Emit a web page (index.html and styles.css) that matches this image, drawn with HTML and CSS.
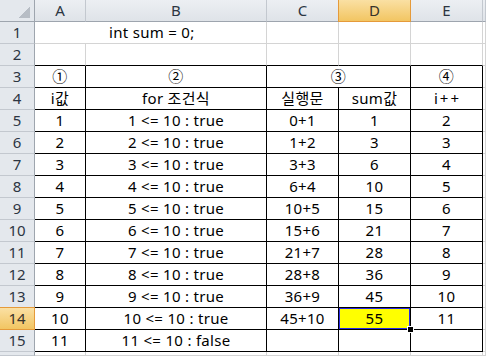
FILE: index.html
```html
<!DOCTYPE html>
<html lang="ko">

<head>
    <meta charset="UTF-8">
    <meta name="viewport" content="width=device-width, initial-scale=1.0">
    <title>for loop sum</title>
    <link rel="stylesheet" href="styles.css">
</head>

<body>

    <div class="sheet">
        <!-- column headers -->
        <div class="corner"></div>
        <div class="col-head">A</div>
        <div class="col-head">B</div>
        <div class="col-head">C</div>
        <div class="col-head sel">D</div>
        <div class="col-head">E</div>
        <div class="col-head"></div>

        <div class="row-head">1</div>
        <div class="cell wide code">int sum = 0;</div>
        <div class="cell"></div>
        <div class="cell"></div>
        <div class="cell"></div>
        <div class="cell"></div>

        <div class="row-head">2</div>
        <div class="cell edge"></div>
        <div class="cell edge"></div>
        <div class="cell edge"></div>
        <div class="cell edge"></div>
        <div class="cell edge"></div>
        <div class="cell"></div>

        <!-- step numbers + titles -->
        <div class="row-head">3</div>
        <div class="cell box">①</div>
        <div class="cell box">②</div>
        <div class="cell box wide">③</div>
        <div class="cell box">④</div>
        <div class="cell"></div>

        <div class="row-head">4</div>
        <div class="cell box">i값</div>
        <div class="cell box">for 조건식</div>
        <div class="cell box">실행문</div>
        <div class="cell box">sum값</div>
        <div class="cell box inc">i++</div>
        <div class="cell"></div>

        <div class="row-head">5</div>
        <div class="cell box">1</div>
        <div class="cell box">1 &lt;= 10 : true</div>
        <div class="cell box">0+1</div>
        <div class="cell box">1</div>
        <div class="cell box">2</div>
        <div class="cell"></div>

        <div class="row-head">6</div>
        <div class="cell box">2</div>
        <div class="cell box">2 &lt;= 10 : true</div>
        <div class="cell box">1+2</div>
        <div class="cell box">3</div>
        <div class="cell box">3</div>
        <div class="cell"></div>

        <div class="row-head">7</div>
        <div class="cell box">3</div>
        <div class="cell box">3 &lt;= 10 : true</div>
        <div class="cell box">3+3</div>
        <div class="cell box">6</div>
        <div class="cell box">4</div>
        <div class="cell"></div>

        <div class="row-head">8</div>
        <div class="cell box">4</div>
        <div class="cell box">4 &lt;= 10 : true</div>
        <div class="cell box">6+4</div>
        <div class="cell box">10</div>
        <div class="cell box">5</div>
        <div class="cell"></div>

        <div class="row-head">9</div>
        <div class="cell box">5</div>
        <div class="cell box">5 &lt;= 10 : true</div>
        <div class="cell box">10+5</div>
        <div class="cell box">15</div>
        <div class="cell box">6</div>
        <div class="cell"></div>

        <div class="row-head">10</div>
        <div class="cell box">6</div>
        <div class="cell box">6 &lt;= 10 : true</div>
        <div class="cell box">15+6</div>
        <div class="cell box">21</div>
        <div class="cell box">7</div>
        <div class="cell"></div>

        <div class="row-head">11</div>
        <div class="cell box">7</div>
        <div class="cell box">7 &lt;= 10 : true</div>
        <div class="cell box">21+7</div>
        <div class="cell box">28</div>
        <div class="cell box">8</div>
        <div class="cell"></div>

        <div class="row-head">12</div>
        <div class="cell box">8</div>
        <div class="cell box">8 &lt;= 10 : true</div>
        <div class="cell box">28+8</div>
        <div class="cell box">36</div>
        <div class="cell box">9</div>
        <div class="cell"></div>

        <div class="row-head">13</div>
        <div class="cell box">9</div>
        <div class="cell box">9 &lt;= 10 : true</div>
        <div class="cell box">36+9</div>
        <div class="cell box">45</div>
        <div class="cell box">10</div>
        <div class="cell"></div>

        <div class="row-head sel">14</div>
        <div class="cell box">10</div>
        <div class="cell box">10 &lt;= 10 : true</div>
        <div class="cell box">45+10</div>
        <div class="cell box active">55</div>
        <div class="cell box">11</div>
        <div class="cell"></div>

        <div class="row-head">15</div>
        <div class="cell box">11</div>
        <div class="cell box">11 &lt;= 10 : false</div>
        <div class="cell box"></div>
        <div class="cell box"></div>
        <div class="cell box"></div>
        <div class="cell"></div>

        <!-- next row, only its top edge shows -->
        <div class="row-head"></div>
        <div class="cell"></div>
        <div class="cell"></div>
        <div class="cell"></div>
        <div class="cell"></div>
        <div class="cell"></div>
        <div class="cell"></div>
    </div>

</body>

</html>
```

FILE: styles.css
```css
*,
::before,
::after {
    margin: 0;
    box-sizing: border-box;
}

html,
body {
    height: 100%;
    overflow: hidden;
}

body {
    font: 15px/21px "Noto Sans", "Noto Sans CJK KR", sans-serif;
    letter-spacing: 0.3px;
    background: #fff;
    color: #000;
}

.sheet {
    display: grid;
    grid-template-columns: 35px 51px 181px 72px 72px 72px 1fr;
    grid-template-rows: repeat(16, 22px) 4px;
}

/* header strip */
.corner,
.col-head,
.row-head {
    background: #e4e8ed;
    color: #2c3542;
    text-align: center;
    letter-spacing: 0;
    border-right: 1px solid #c3c8cf;
    border-bottom: 1px solid #c3c8cf;
}

.corner {
    border-right-color: #9ea5ae;
    border-bottom-color: #9ea5ae;
    background: linear-gradient(to top left, #b7bdc5 50%, transparent 50%) no-repeat right 4px bottom 3px / 12px 12px, #e4e8ed;
}

.col-head {
    background: linear-gradient(#eceff3, #dfe3e8);
    border-bottom-color: #9ea5ae;
}

.row-head {
    border-right-color: #9ea5ae;
}

.col-head.sel,
.row-head.sel {
    background: linear-gradient(#fae0a3, #f2c562);
    border-color: #e59a3a;
    color: #38322a;
}

.col-head.sel {
    box-shadow: -1px 0 0 #e59a3a;
}

.row-head.sel {
    box-shadow: 0 -1px 0 #e59a3a;
}

/* cells */
.cell {
    text-align: center;
    white-space: nowrap;
    overflow: hidden;
    border-right: 1px solid #d4d4d4;
    border-bottom: 1px solid #d4d4d4;
}

.wide {
    grid-column: span 2;
}

.code {
    text-align: left;
    padding-left: 74px;
}

.inc {
    letter-spacing: 2px;
    text-indent: 2px;
}

.edge {
    border-bottom-color: #000;
}

.box {
    border-right-color: #000;
    border-bottom-color: #000;
}

.active {
    position: relative;
    z-index: 1;
    overflow: visible;
    background: #ff0;
    box-shadow: inset 0 0 0 1px #2a2ae6;
}

/* fill handle */
.active::after {
    content: "";
    position: absolute;
    right: -4px;
    bottom: -4px;
    width: 7px;
    height: 7px;
    background: #000;
    border: 1px solid #fff;
}
```
